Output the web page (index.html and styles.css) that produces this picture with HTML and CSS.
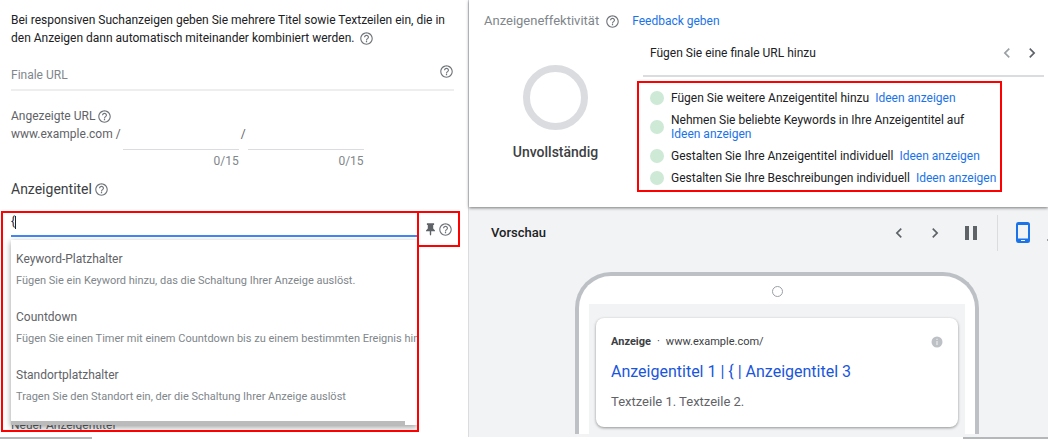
FILE: index.html
```html
<!DOCTYPE html>
<html lang="de">
<head>
    <meta charset="UTF-8">
    <meta name="viewport" content="width=device-width, initial-scale=1.0">
    <title>Responsive Suchanzeige</title>
    <link rel="stylesheet" href="styles.css">
</head>
<body>
    <!-- shared icons -->
    <svg class="sprite" aria-hidden="true">
        <symbol id="help" viewBox="0 0 24 24">
            <path d="M11 18h2v-2h-2v2zm1-16C6.48 2 2 6.48 2 12s4.48 10 10 10 10-4.48 10-10S17.52 2 12 2zm0 18.2c-4.5 0-8.2-3.7-8.2-8.2S7.500 3.800 12 3.800s8.200 3.700 8.200 8.200-3.700 8.200-8.200 8.200zM12 6c-2.210 0-4 1.790-4 4h1.800c0-1.200 1-2.200 2.200-2.200s2.200 1 2.200 2.200c0 2-3.100 1.800-3.100 5h1.800c0-2.250 3.100-2.500 3.100-5 0-2.210-1.790-4-4-4z"/>
        </symbol>
        <symbol id="prev" viewBox="0 0 24 24">
            <path d="M15.410 7.410L14 6l-6 6 6 6 1.410-1.410L10.830 12z"/>
        </symbol>
        <symbol id="next" viewBox="0 0 24 24">
            <path d="M10 6L8.590 7.410 13.170 12l-4.580 4.590L10 18l6-6z"/>
        </symbol>
    </svg>

    <div class="layout">
        <div class="editor">
            <p class="intro">Bei responsiven Suchanzeigen geben Sie mehrere Titel sowie Textzeilen ein, die in den Anzeigen dann automatisch miteinander kombiniert werden. <svg class="help"><use href="#help"/></svg></p>

            <div class="final-url">
                <input type="text" id="finalUrl" placeholder="Finale URL" aria-label="Finale URL">
                <svg class="help"><use href="#help"/></svg>
            </div>

            <div class="label-row">
                <label for="path1">Angezeigte URL</label>
                <svg class="help"><use href="#help"/></svg>
            </div>
            <div class="paths">
                <span>www.example.com /</span>
                <div class="path">
                    <input type="text" id="path1">
                    <span class="counter">0/15</span>
                </div>
                <span>/</span>
                <div class="path">
                    <input type="text" id="path2" aria-label="Pfad 2">
                    <span class="counter">0/15</span>
                </div>
            </div>

            <div class="label-row headline-label">
                <label for="headline">Anzeigentitel</label>
                <svg class="help"><use href="#help"/></svg>
            </div>

            <div class="headlines">
                <div class="marked headline-box">
                    <input type="text" id="headline" value="{">
                    <i class="caret"></i>
                    <div class="new-headline">Neuer Anzeigentitel</div>
                    <div class="menu">
                        <div class="option">
                            <div class="option-title">Keyword-Platzhalter</div>
                            <div class="option-text">Fügen Sie ein Keyword hinzu, das die Schaltung Ihrer Anzeige auslöst.</div>
                        </div>
                        <div class="option">
                            <div class="option-title">Countdown</div>
                            <div class="option-text">Fügen Sie einen Timer mit einem Countdown bis zu einem bestimmten Ereignis hin</div>
                        </div>
                        <div class="option">
                            <div class="option-title">Standortplatzhalter</div>
                            <div class="option-text">Tragen Sie den Standort ein, der die Schaltung Ihrer Anzeige auslöst</div>
                        </div>
                        <div class="scrollbar"></div>
                    </div>
                </div>
                <div class="marked pin-box">
                    <button class="icon-button" aria-label="Anpinnen">
                        <svg class="pin" viewBox="0 0 10 14"><path d="M1 0h8v2H8v4l2 2v1H5.800v3.500L5 14l-.8-1.500V9H0V8l2-2V2H1z"/></svg>
                    </button>
                    <svg class="help"><use href="#help"/></svg>
                </div>
            </div>
        </div>

        <div class="side">
            <div class="strength">
                <div class="strength-head">
                    <h2>Anzeigeneffektivität</h2>
                    <svg class="help"><use href="#help"/></svg>
                    <a href="#">Feedback geben</a>
                </div>
                <div class="strength-body">
                    <div class="score">
                        <div class="ring"></div>
                        <div class="score-text">Unvollständig</div>
                    </div>
                    <div class="tips">
                        <div class="tip-nav">
                            <span>Fügen Sie eine finale URL hinzu</span>
                            <button class="icon-button dim" aria-label="Zurück"><svg class="arrow"><use href="#prev"/></svg></button>
                            <button class="icon-button" aria-label="Weiter"><svg class="arrow"><use href="#next"/></svg></button>
                        </div>
                        <ul class="marked ideas">
                            <li><i class="dot"></i><span>Fügen Sie weitere Anzeigentitel hinzu <a href="#">Ideen anzeigen</a></span></li>
                            <li><i class="dot"></i><span>Nehmen Sie beliebte Keywords in Ihre Anzeigentitel auf <a class="below" href="#">Ideen anzeigen</a></span></li>
                            <li><i class="dot"></i><span>Gestalten Sie Ihre Anzeigentitel individuell <a href="#">Ideen anzeigen</a></span></li>
                            <li><i class="dot"></i><span>Gestalten Sie Ihre Beschreibungen individuell <a href="#">Ideen anzeigen</a></span></li>
                        </ul>
                    </div>
                </div>
            </div>

            <div class="preview">
                <div class="preview-head">
                    <h3>Vorschau</h3>
                    <div class="controls">
                        <button class="icon-button" aria-label="Vorherige"><svg class="arrow"><use href="#prev"/></svg></button>
                        <button class="icon-button" aria-label="Nächste"><svg class="arrow"><use href="#next"/></svg></button>
                        <button class="icon-button" aria-label="Pause"><svg class="pause" viewBox="0 0 12 14"><path d="M0 0h4v14H0zM8 0h4v14H8z"/></svg></button>
                    </div>
                    <div class="devices">
                        <button class="icon-button" aria-label="Mobil"><svg class="mobile" viewBox="0 0 14 22"><path fill-rule="evenodd" d="M2.500 0h9A2.500 2.500 0 0 1 14 2.500v16a2.500 2.500 0 0 1-2.500 2.500h-9A2.500 2.500 0 0 1 0 18.500v-16A2.500 2.500 0 0 1 2.500 0zM2 3v13.500h10V3zM5 18v1h4v-1z"/></svg></button>
                        <button class="icon-button dim" aria-label="Computer"><svg class="desktop" viewBox="0 0 24 22"><path fill-rule="evenodd" d="M4 2h16v13H4zM6 4v9h12V4zM0 17h24v2H0z"/></svg></button>
                    </div>
                </div>
                <div class="phone">
                    <div class="camera"></div>
                    <div class="screen">
                        <div class="ad">
                            <div class="ad-url">
                                <b>Anzeige</b><span>·</span><span>www.example.com/</span>
                                <svg class="info" viewBox="0 0 12 12"><circle cx="6" cy="6" r="5.500" fill="#bdc1c6"/><path d="M5.400 2.800h1.200V4H5.400zM5.400 5h1.200v4H5.400z" fill="#e8eaed"/></svg>
                            </div>
                            <a class="ad-title" href="#">Anzeigentitel 1 | { | Anzeigentitel 3</a>
                            <div class="ad-text">Textzeile 1. Textzeile 2.</div>
                        </div>
                    </div>
                </div>
            </div>
        </div>
    </div>
    <div class="bottom">
        <div class="bar"></div>
        <div class="bar"></div>
    </div>
</body>
</html>
```
FILE: styles.css
```css
* {
    box-sizing: border-box;
}
body {
    margin: 0;
    font-family: Roboto, "Liberation Sans", sans-serif;
    font-size: 12px;
    line-height: 18px;
    color: #3c4043;
    background: #fff;
    overflow: hidden;
}
a {
    color: #1a73e8;
    text-decoration: none;
}
h2, h3, p, ul {
    margin: 0;
    padding: 0;
}
input {
    border: none;
    outline: none;
    background: none;
    padding: 0;
    font: inherit;
    color: inherit;
}
.sprite {
    display: none;
}
.help {
    width: 15px;
    height: 15px;
    fill: #70757a;
    flex: none;
}
.icon-button {
    display: flex;
    align-items: center;
    justify-content: center;
    padding: 0;
    border: none;
    background: none;
    fill: #5f6368;
    cursor: pointer;
}
.dim {
    fill: #9aa0a6;
}
.arrow {
    width: 20px;
    height: 20px;
}
.marked {
    border: 2px solid #f00;
}
.layout {
    display: grid;
    grid-template-columns: 468px 1fr;
}

/* left: ad editor */
.editor {
    padding: 11px 8px 0 11px;
}
.intro {
    color: #202124;
}
.intro .help {
    margin-left: 2px;
    vertical-align: -4px;
}
.final-url {
    display: flex;
    align-items: center;
    margin: 13px 6px 0 0;
    height: 31px;
    border-bottom: 2px solid #eee;
}
.final-url input {
    flex: 1;
    height: 29px;
}
.final-url input::placeholder {
    color: #80868b;
    opacity: 1;
}
.final-url .help {
    margin-bottom: 7px;
}
.label-row {
    display: flex;
    align-items: center;
    gap: 2px;
    margin-top: 16px;
    color: #5f6368;
}
.paths {
    display: flex;
    gap: 2px;
    color: #5f6368;
}
.path {
    width: 116px;
}
.path input {
    display: block;
    width: 100%;
    height: 25px;
    border-bottom: 1px solid #dadce0;
}
.counter {
    display: block;
    margin-top: 2px;
    text-align: right;
    color: #80868b;
}
.headline-label {
    margin-top: 10px;
    font-size: 14px;
    color: #3c4043;
}
.headlines {
    display: flex;
    align-items: flex-start;
    margin: 13px 0 0 -10px;
}
.headline-box {
    flex: 1;
    position: relative;
    height: 221px;
    padding-left: 8px;
    overflow: hidden;
}
.headline-box input {
    display: block;
    width: 100%;
    height: 24px;
    padding-bottom: 6px;
    border-bottom: 2px solid #4285f4;
    color: #202124;
}
.caret {
    position: absolute;
    top: 3px;
    left: 12px;
    width: 1px;
    height: 13px;
    background: #202124;
}
.new-headline {
    margin-top: 179px;
    color: #5f6368;
}
.menu {
    position: absolute;
    top: 27px;
    left: 8px;
    right: 0;
    height: 185px;
    padding-top: 10px;
    background: #fff;
    box-shadow: 0 2px 6px rgba(0, 0, 0, 0.4);
    overflow: hidden;
}
.option {
    height: 58px;
    padding-left: 5px;
    white-space: nowrap;
}
.option-title {
    color: #5f6368;
}
.option-text {
    margin-top: 4px;
    font-size: 11px;
    color: #80868b;
}
.scrollbar {
    position: absolute;
    left: 0;
    bottom: 0;
    width: 97%;
    height: 4px;
    background: #bbb;
}
.pin-box {
    display: flex;
    align-items: center;
    justify-content: center;
    gap: 3px;
    width: 43px;
    height: 36px;
    margin-left: -2px;
    padding-left: 2px;
}
.pin {
    width: 9px;
    height: 13px;
}

/* right: ad strength and preview */
.side {
    display: flex;
    flex-direction: column;
    min-width: 0;
    border-left: 1px solid #dadce0;
    background: #f1f3f4;
}
.strength {
    height: 207px;
    padding: 12px 4px 0 15px;
    background: #fff;
    box-shadow: 0 1px 3px rgba(0, 0, 0, 0.5);
}
.strength-head {
    display: flex;
    align-items: center;
    gap: 6px;
}
.strength-head h2 {
    font-size: 13px;
    font-weight: 400;
    color: #80868b;
}
.strength-head a {
    margin-left: 6px;
}
.strength-body {
    display: flex;
}
.score {
    width: 143px;
    margin-right: 10px;
    padding-top: 35px;
    text-align: center;
}
.ring {
    width: 65px;
    height: 65px;
    margin: 0 auto;
    border: 7px solid #dadce0;
    border-radius: 50%;
}
.score-text {
    margin-top: 13px;
    font-size: 14px;
    font-weight: 500;
}
.tips {
    flex: 1;
    color: #202124;
}
.tip-nav {
    display: flex;
    align-items: center;
    gap: 5px;
    height: 47px;
    margin-left: 6px;
    padding: 0 2px 0 7px;
    border-bottom: 2px solid #dadce0;
}
.tip-nav span {
    flex: 1;
}
.ideas {
    display: grid;
    align-content: start;
    gap: 8px;
    width: 365px;
    height: 111px;
    margin-top: 4px;
    padding: 8px 0 0 11px;
    line-height: 14px;
    list-style: none;
}
.ideas li {
    display: flex;
    align-items: center;
    gap: 7px;
    white-space: nowrap;
}
.ideas a {
    margin-left: 3px;
}
.ideas .below {
    display: block;
    margin-left: 0;
}
.dot {
    width: 14px;
    height: 14px;
    border-radius: 50%;
    background: #ceead6;
}
.preview {
    flex: 1;
    padding-bottom: 3px;
}
.preview-head {
    display: flex;
    align-items: center;
    height: 51px;
    margin-bottom: 14px;
    padding-left: 22px;
}
.preview-head h3 {
    flex: 1;
    font-size: 13px;
    font-weight: 500;
    color: #202124;
}
.controls {
    display: flex;
    gap: 16px;
    margin-right: 16px;
}
.controls .icon-button {
    width: 20px;
}
.pause {
    width: 12px;
    height: 14px;
}
.devices {
    display: flex;
    align-items: center;
    gap: 17px;
    width: 51px;
    height: 36px;
    padding-left: 18px;
    border-left: 1px solid #dadce0;
    overflow: hidden;
}
.devices .icon-button {
    flex: none;
}
.mobile {
    width: 14px;
    height: 22px;
    fill: #1a73e8;
}
.desktop {
    width: 24px;
    height: 22px;
}
.phone {
    width: 404px;
    height: 162px;
    margin-left: 106px;
    padding: 10px 10px 0;
    border: 4px solid #bdc1c6;
    border-bottom: none;
    border-radius: 36px 36px 0 0;
    background: #fff;
}
.camera {
    width: 11px;
    height: 11px;
    margin: 0 auto 7px;
    border: 1px solid #9aa0a6;
    border-radius: 50%;
}
.screen {
    height: 130px;
    padding: 14px 7px 0;
    background: #f1f3f4;
}
.ad {
    height: 109px;
    padding: 15px;
    border-radius: 8px;
    background: #fff;
    box-shadow: 0 1px 3px rgba(0, 0, 0, 0.4);
}
.ad-url {
    display: flex;
    align-items: center;
    gap: 6px;
    font-size: 11px;
}
.info {
    width: 12px;
    height: 12px;
    margin-left: auto;
}
.ad-title {
    display: block;
    margin: 9px 0;
    font-size: 16px;
    line-height: 24px;
    color: #1a56db;
}
.ad-text {
    font-size: 13px;
    color: #5f6368;
}
.bottom {
    display: flex;
    justify-content: space-between;
}
.bar {
    width: 92px;
    height: 2px;
    background: #b5b8ba;
}
.bar:last-child {
    width: 85px;
}
```
